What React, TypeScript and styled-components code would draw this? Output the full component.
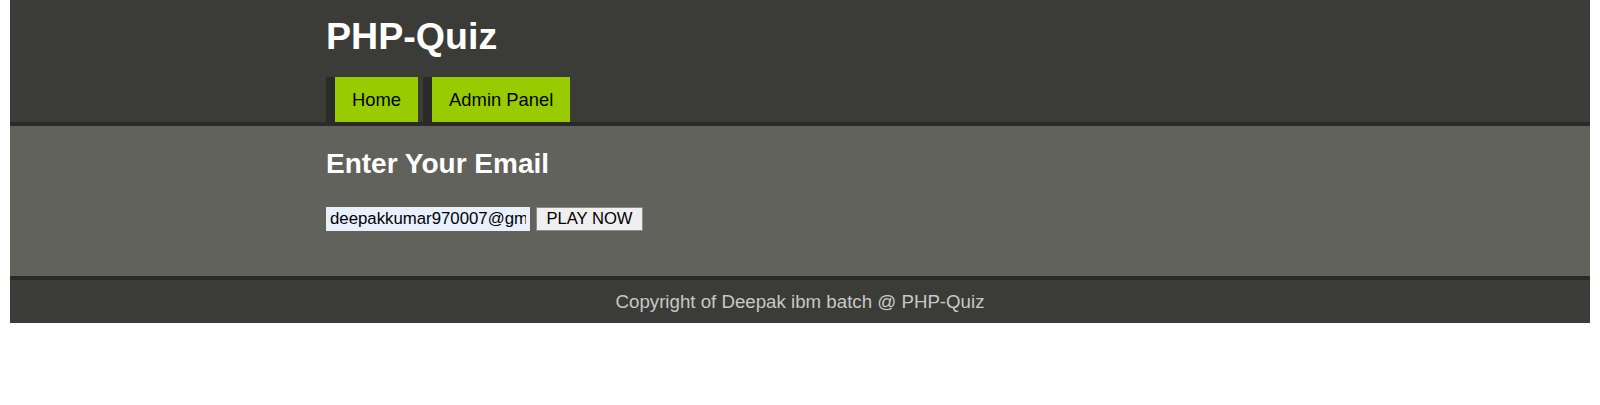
import React from "react";
import styled, { createGlobalStyle } from "styled-components";

const GlobalStyle = createGlobalStyle`
  html, body { margin: 0; padding: 0; background: #ffffff; }
  body {
    margin: 0 10px;
    font-family: "Liberation Sans", Arial, sans-serif;
    font-size: 18px;
  }
`;

const Header = styled.header`
  background: #3b3b37;
  border-bottom: 4px solid #2a2a27;
  padding: 0 20%;
  height: 122px;
  display: flex;
  flex-direction: column;
  justify-content: space-between;
`;

const Title = styled.h1`
  margin: 0;
  padding-top: 15px;
  color: #ffffff;
  font-size: 37.6px;
  font-weight: bold;
  line-height: 42px;
`;

const Nav = styled.nav`
  display: flex;
  gap: 5px;
`;

const NavItem = styled.a`
  display: flex;
  align-items: center;
  height: 45px;
  padding: 0 17px;
  background: #99cc00;
  border-left: 9px solid #2a2a27;
  color: #000000;
  text-decoration: none;
  font-size: 18.4px;
`;

const Main = styled.main`
  background: #62625d;
  border-bottom: 4px solid #2a2a27;
  padding: 0 20%;
  height: 150px;
`;

const Heading = styled.h2`
  margin: 0;
  padding-top: 22px;
  color: #ffffff;
  font-size: 28px;
  font-weight: bold;
  line-height: 31px;
`;

const Form = styled.form`
  display: flex;
  gap: 6px;
  margin-top: 28px;
`;

const EmailInput = styled.input`
  box-sizing: border-box;
  width: 204px;
  height: 24px;
  padding: 0 4px;
  border: none;
  background: #e8f0fe;
  color: #000000;
  font-family: "Liberation Sans", Arial, sans-serif;
  font-size: 16.8px;
  outline: none;
`;

const PlayButton = styled.button`
  box-sizing: border-box;
  width: 107px;
  height: 24px;
  padding: 0;
  border: 1px solid #8a8a8a;
  background: #efefef;
  color: #000000;
  font-family: "Liberation Sans", Arial, sans-serif;
  font-size: 16.6px;
`;

const Footer = styled.footer`
  background: #3b3b37;
  height: 43px;
  display: flex;
  align-items: center;
  justify-content: center;
  color: #c8c8c8;
  font-size: 18.7px;
`;

export default function App() {
  return (
    <>
      <GlobalStyle />
      <Header>
        <Title>PHP-Quiz</Title>
        <Nav>
          <NavItem href="#">Home</NavItem>
          <NavItem href="#">Admin Panel</NavItem>
        </Nav>
      </Header>
      <Main>
        <Heading>Enter Your Email</Heading>
        <Form onSubmit={(e) => e.preventDefault()}>
          <EmailInput type="email" defaultValue="deepakkumar970007@gmail.com" />
          <PlayButton type="submit">PLAY NOW</PlayButton>
        </Form>
      </Main>
      <Footer>Copyright of Deepak ibm batch @ PHP-Quiz</Footer>
    </>
  );
}
